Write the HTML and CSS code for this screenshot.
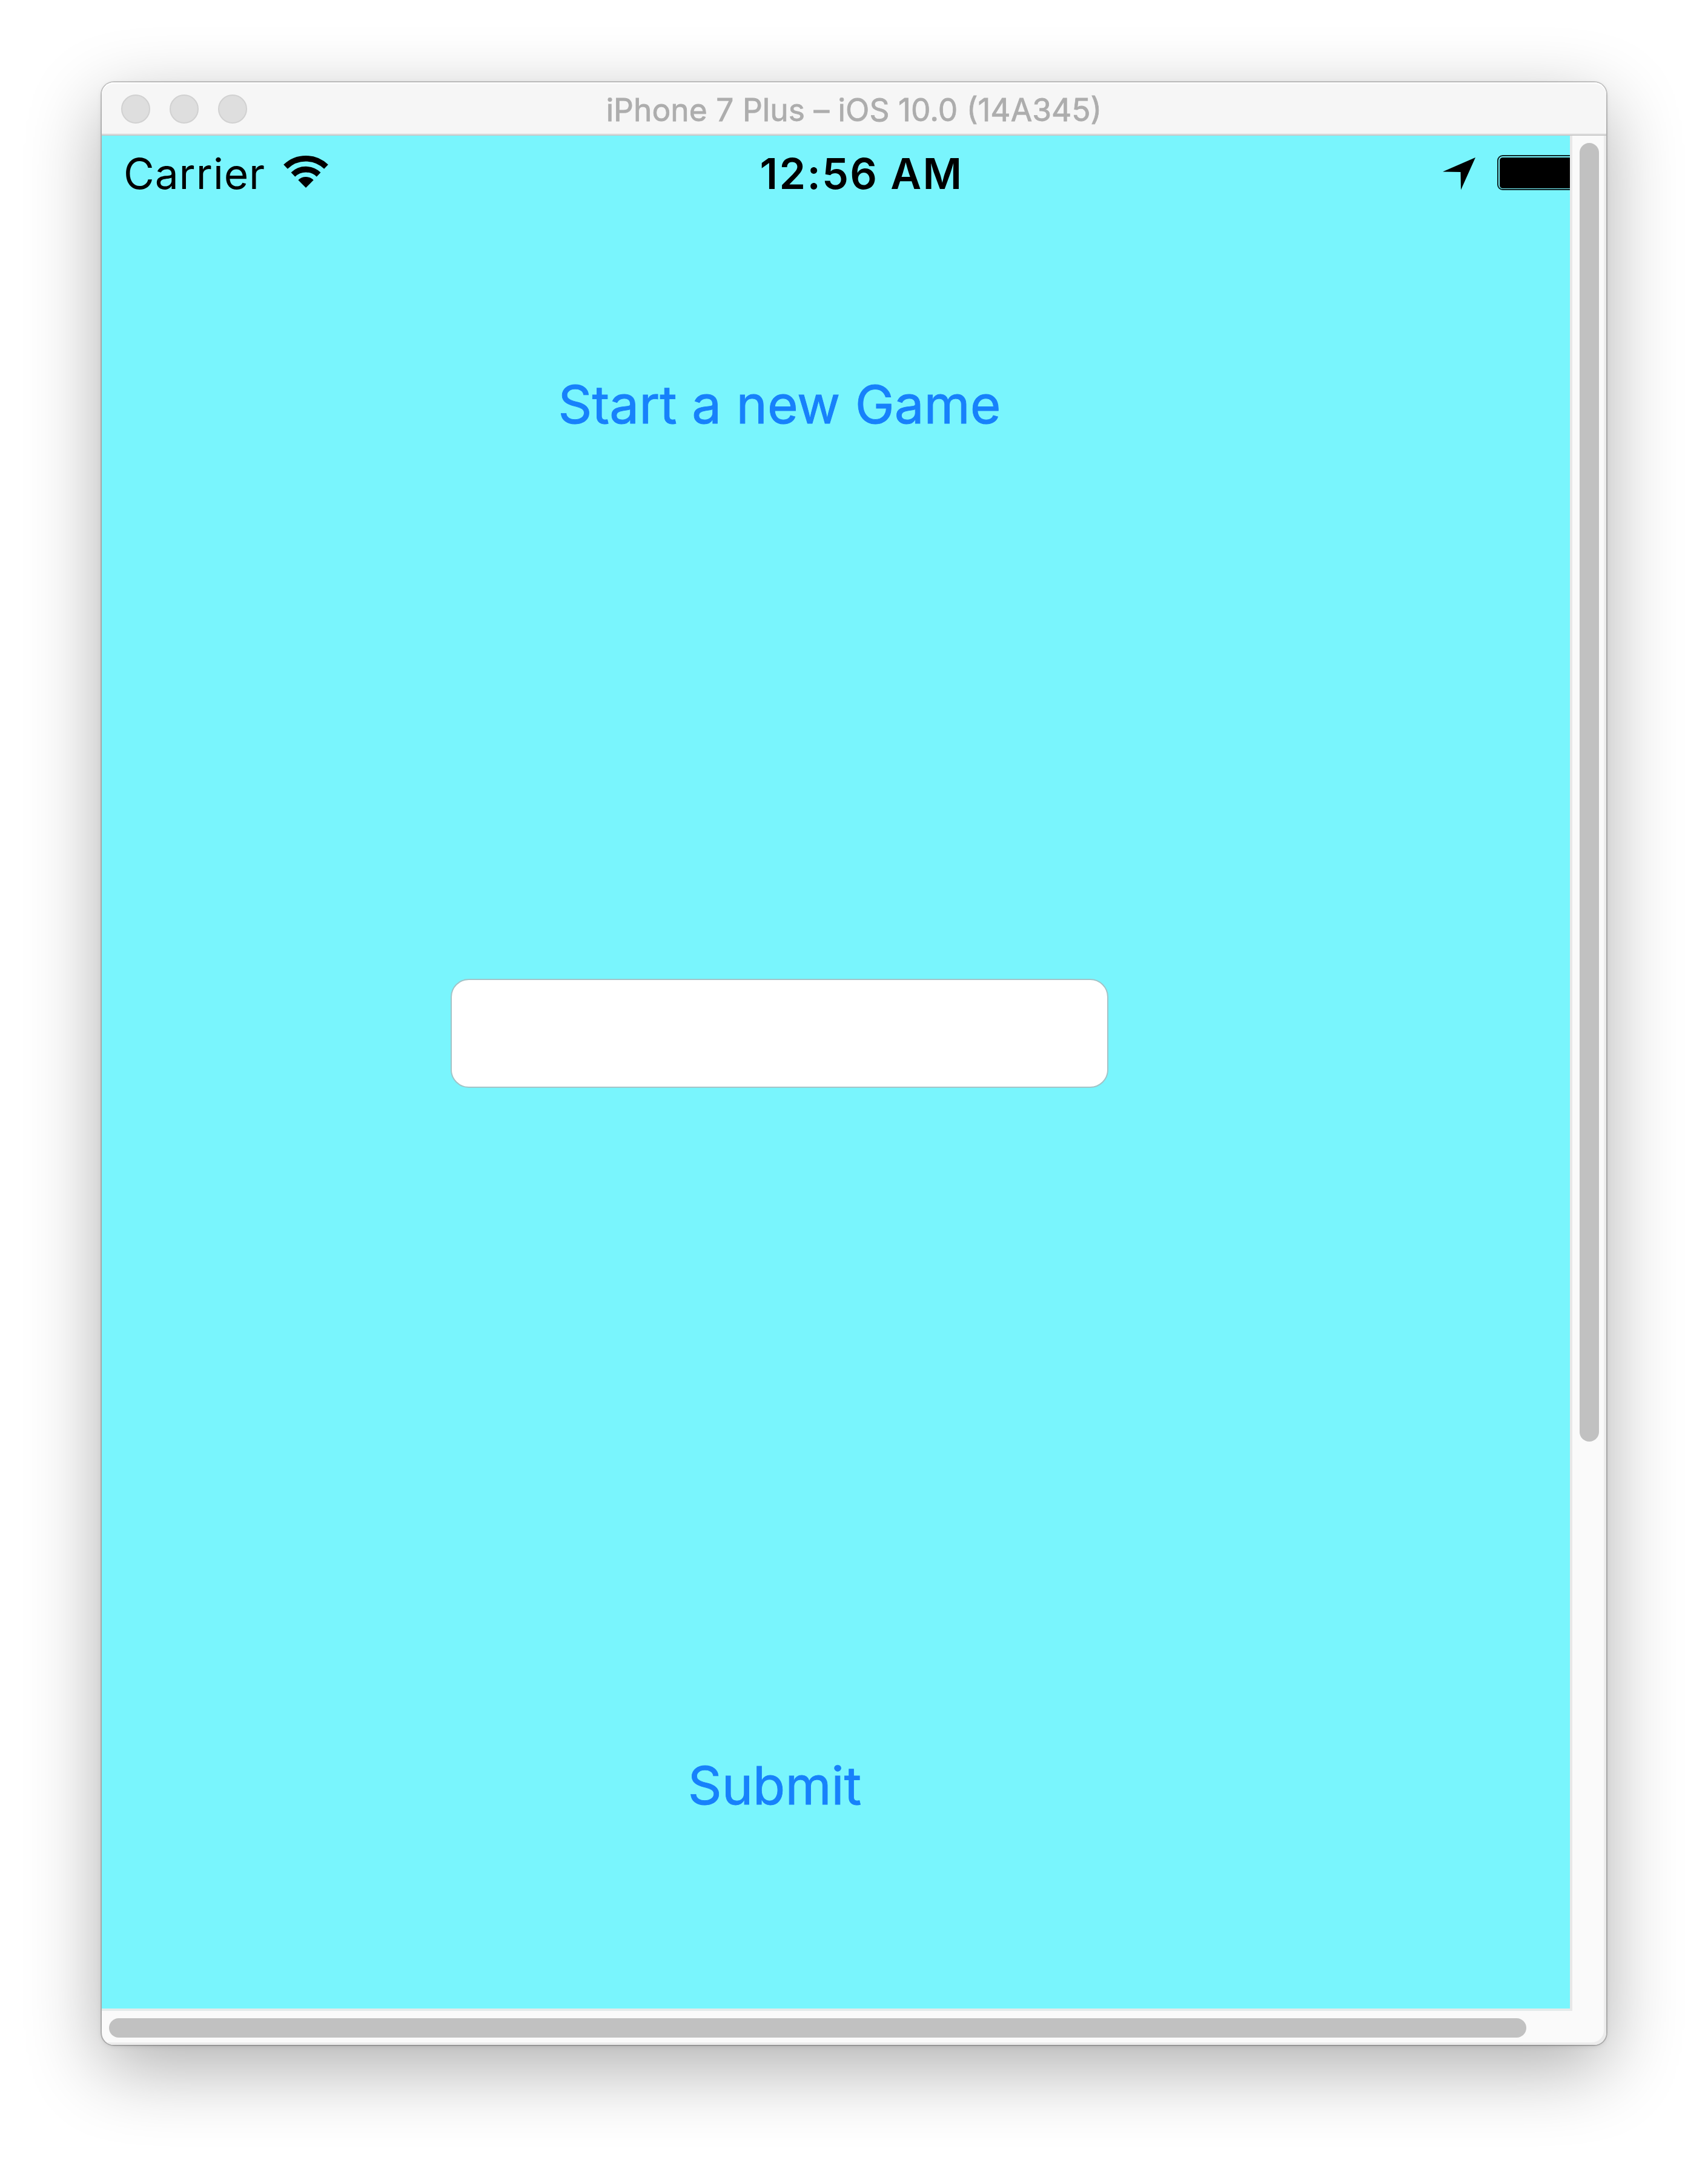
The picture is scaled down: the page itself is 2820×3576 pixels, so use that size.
FILE: index.html
```
<!DOCTYPE html>
<html lang="en">
<head>
<meta charset="utf-8">
<title>iPhone 7 Plus – iOS 10.0 (14A345)</title>
<link rel="stylesheet" href="styles.css">
</head>
<body>
<main class="window">
  <header class="titlebar">
    <div class="lights"><span class="light"></span><span class="light"></span><span class="light"></span></div>
    <h1 class="title">iPhone 7 Plus – iOS 10.0 (14A345)</h1>
  </header>
  <div class="viewport">
    <section class="screen">
      <div class="statusbar">
        <div class="network">
          <span class="carrier">Carrier</span>
          <svg class="wifi" width="74" height="54" viewBox="0 0 74 54">
            <path d="M3.5 19.3A48.2 48.2 0 0 1 70.5 19.3M15.9 32.2A30.3 30.3 0 0 1 58.1 32.2" fill="none" stroke="#000" stroke-width="9.6"/>
            <path d="M37 54L24.3 41.2A18 18 0 0 1 49.7 41.2Z"/>
          </svg>
        </div>
        <span class="time">12:56 AM</span>
        <div class="indicators">
          <svg class="location" width="54" height="54" viewBox="0 0 54 54"><path d="M0 23.5L54 0L30 53.500L29.500 24Z"/></svg>
          <div class="battery"><div class="charge"></div></div>
        </div>
      </div>
      <div class="form">
        <button class="action start">Start a new Game</button>
        <input class="field" type="text">
        <button class="action submit">Submit</button>
      </div>
    </section>
    <div class="track vertical"><div class="thumb"></div></div>
    <div class="track horizontal"><div class="thumb"></div></div>
    <div class="corner"></div>
  </div>
</main>
</body>
</html>
```
FILE: styles.css
```
* { box-sizing: border-box; }
body {
  margin: 0;
  padding: 136px 168px 200px;
  background: #fff;
  font-family: Inter, "Liberation Sans", sans-serif;
}
.window {
  display: flex;
  flex-direction: column;
  width: 2484px;
  height: 3240px;
  border-radius: 20px;
  background: #fafafa;
  box-shadow:
    0 0 0 2px rgba(0, 0, 0, .19),
    0 2px 8px rgba(0, 0, 0, .1),
    0 38px 124px rgba(0, 0, 0, .32);
}
.titlebar {
  display: grid;
  grid-template-columns: 300px 1fr 300px;
  align-items: center;
  height: 88px;
  padding-top: 2px;
  border-bottom: 2px solid #c9c9c9;
  border-radius: 20px 20px 0 0;
  background: #f6f6f6;
  box-shadow: inset 0 2px #fff, inset 0 -2px #e8e8e8;
}
.lights { display: flex; gap: 32px; padding-left: 32px; }
.light {
  width: 48px;
  height: 48px;
  border: 2px solid #d1d1d1;
  border-radius: 50%;
  background: #dedede;
}
.title {
  margin: 0;
  padding-top: 2px;
  text-align: center;
  font-size: 51.5px;
  font-weight: 400;
  line-height: 76px;
  color: #adadad;
  -webkit-text-stroke: .8px #adadad;
}
.viewport {
  display: grid;
  grid-template-columns: 2424px 60px;
  grid-template-rows: 3092px 60px;
  overflow: hidden;
  border-radius: 0 0 20px 20px;
}
.screen {
  overflow: hidden;
  background: #79f5fd;
}
.statusbar {
  display: grid;
  grid-template-columns: 1fr auto 1fr;
  align-items: center;
  width: 2504px;
  height: 124px;
}
.network {
  display: flex;
  align-items: center;
  gap: 30px;
  padding-left: 36px;
}
.carrier { padding-top: 1px; font-size: 69.5px; line-height: 80px; letter-spacing: .9px; }
.wifi { margin-bottom: 6px; }
.time {
  padding: 2px 0 0 5px;
  font-size: 70px;
  line-height: 80px;
  font-weight: 600;
  letter-spacing: 2.3px;
}
.indicators {
  display: flex;
  align-items: center;
  justify-content: flex-end;
  gap: 36px;
}
.location { margin-top: 2px; }
.battery {
  width: 200px;
  height: 58px;
  margin-bottom: 2px;
  padding: 1.5px;
  border: 2.5px solid #0a2022;
  border-radius: 9px;
}
.charge { height: 100%; border-radius: 5px; background: #000; }
.form {
  display: flex;
  flex-direction: column;
  align-items: center;
  width: 2238px;
  padding-top: 260px;
}
.action {
  padding: 0;
  border: 0;
  background: none;
  font-family: inherit;
  font-size: 87px;
  line-height: 120px;
  color: #1781fb;
  -webkit-text-stroke: .9px #1781fb;
}
.field {
  width: 1086px;
  height: 180px;
  margin: 888px 0 1092px;
  padding: 0 30px;
  border: 2px solid #a3c3c7;
  border-radius: 30px;
  background: #fff;
  font: inherit;
  font-size: 87px;
}
.submit { margin-right: 16px; }
.vertical {
  padding: 12px 12px 0 16px;
  box-shadow: inset 4px 0 #e8e8e8, inset -4px 0 #ececec;
}
.horizontal {
  padding: 16px 0 0 12px;
  box-shadow: inset 0 4px #e4eaea, inset 0 -4px #ececec;
}
.thumb { border-radius: 16px; background: #c1c1c1; }
.vertical .thumb { width: 32px; height: 2144px; }
.horizontal .thumb { width: 2340px; height: 32px; }
.corner {
  background: linear-gradient(#e8e8e8, #e8e8e8) 0 0 / 4px 4px no-repeat;
  border-radius: 0 0 20px 0;
  box-shadow: inset -4px -4px #ececec;
}
```
